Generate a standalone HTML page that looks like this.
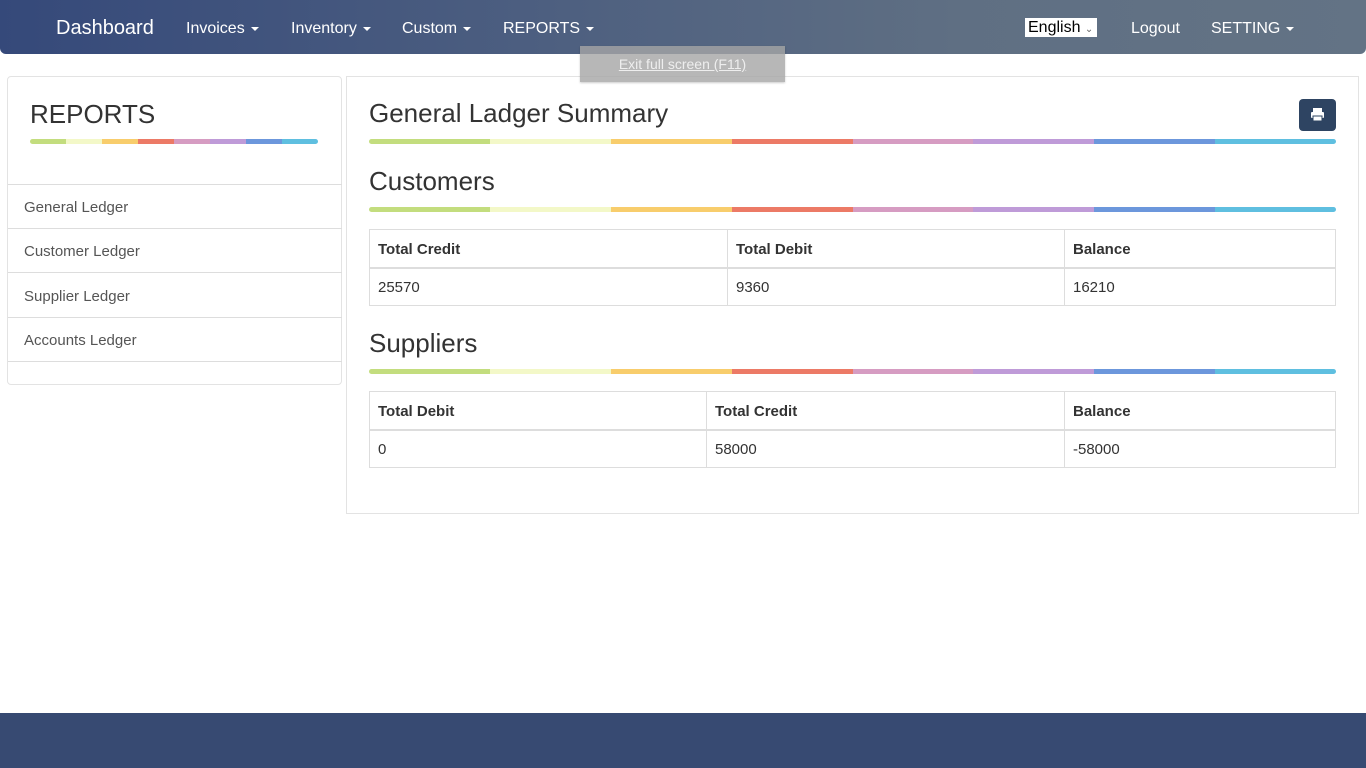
<!DOCTYPE html>
<html><head><style>
*{box-sizing:border-box}
body{margin:0;width:1366px;height:768px;position:relative;font-family:"Liberation Sans",sans-serif;color:#333;background:#fff;overflow:hidden}
.nav{position:absolute;left:0;top:0;width:1366px;height:54px;background:linear-gradient(90deg,#35497a 0%,#4d5f80 40%,#5f6f83 70%,#637385 100%);border-radius:0 0 6px 6px;color:#fff}
.nav span{position:absolute;top:20px;font-size:16px}
.car{display:inline-block;border-left:4px solid transparent;border-right:4px solid transparent;border-top:4px solid #fff;vertical-align:middle;margin-left:6px}
.fs{position:absolute;left:580px;top:46px;width:205px;height:36px;background:rgba(165,165,165,.8);color:#eee;font-size:14px;text-align:center;line-height:37px;text-decoration:underline;z-index:5;box-shadow:0 1px 2px rgba(0,0,0,.2)}
.panel{position:absolute;border:1px solid #e3e3e3;background:#fff}
.bar{position:absolute;height:5px;border-radius:3px;display:flex;overflow:hidden}
.bar i{flex:1}
.c1{background:#c3dd7e}.c2{background:#f3f8c8}.c3{background:#f8cd6c}.c4{background:#ec7a66}.c5{background:#d69cc2}.c6{background:#bf9bd8}.c7{background:#6c97dc}.c8{background:#5fbfe0}
.li{position:absolute;left:0;width:334px;border-top:1px solid #ddd;font-size:15px;color:#555;padding-left:16px}
h2{position:absolute;margin:0;font-weight:normal;font-size:26px;color:#333}
table{position:absolute;border-collapse:collapse;font-size:15px;left:369px;width:967px}
td,th{border:1px solid #ddd;text-align:left;padding:2px 8px 0;height:38px}
th{border-bottom:2px solid #ddd}
</style></head><body>
<div class="nav">
<span style="left:56px;top:17px;font-size:20px">Dashboard</span>
<span style="left:186px">Invoices<i class="car"></i></span>
<span style="left:291px">Inventory<i class="car"></i></span>
<span style="left:402px">Custom<i class="car"></i></span>
<span style="left:503px">REPORTS<i class="car"></i></span>
<span style="left:1025px;top:18px;background:#fff;color:#000;height:19px;width:72px;padding-left:3px;line-height:19px">English <span style="position:static;font-size:10px;color:#666">&#8964;</span></span>
<span style="left:1131px">Logout</span>
<span style="left:1211px">SETTING<i class="car"></i></span>
</div>
<div class="fs">Exit full screen (F11)</div>

<div class="panel" style="left:7px;top:76px;width:335px;height:309px;border-radius:4px">
<div style="position:absolute;left:22px;top:22px;font-size:26px">REPORTS</div>
<div class="bar" style="left:22px;top:62px;width:288px"><i class="c1"></i><i class="c2"></i><i class="c3"></i><i class="c4"></i><i class="c5"></i><i class="c6"></i><i class="c7"></i><i class="c8"></i></div>
<div class="li" style="top:107px;height:45px;line-height:46px">General Ledger</div>
<div class="li" style="top:151px;height:45px;line-height:46px">Customer Ledger</div>
<div class="li" style="top:195px;height:45px;line-height:48px">Supplier Ledger</div>
<div class="li" style="top:240px;height:45px;line-height:46px">Accounts Ledger</div>
<div class="li" style="top:284px;height:1px"></div>
</div>

<div class="panel" style="left:346px;top:76px;width:1013px;height:438px"></div>
<h2 style="left:369px;top:98px">General Ladger Summary</h2>
<div style="position:absolute;left:1299px;top:99px;width:37px;height:32px;background:#2e4462;border-radius:4px">
<svg width="37" height="32" viewBox="0 0 37 32"><rect x="14" y="9" width="9" height="4" fill="#fff"/><rect x="12" y="13" width="13" height="6" rx="1" fill="#fff"/><rect x="14" y="17" width="9" height="5" fill="#fff" stroke="#2e4462" stroke-width="1"/></svg></div>
<div class="bar" style="left:369px;top:139px;width:967px"><i class="c1"></i><i class="c2"></i><i class="c3"></i><i class="c4"></i><i class="c5"></i><i class="c6"></i><i class="c7"></i><i class="c8"></i></div>
<h2 style="left:369px;top:166px">Customers</h2>
<div class="bar" style="left:369px;top:207px;width:967px"><i class="c1"></i><i class="c2"></i><i class="c3"></i><i class="c4"></i><i class="c5"></i><i class="c6"></i><i class="c7"></i><i class="c8"></i></div>
<table style="top:229px"><tr><th style="width:358px">Total Credit</th><th style="width:337px">Total Debit</th><th>Balance</th></tr><tr><td>25570</td><td>9360</td><td>16210</td></tr></table>
<h2 style="left:369px;top:328px">Suppliers</h2>
<div class="bar" style="left:369px;top:369px;width:967px"><i class="c1"></i><i class="c2"></i><i class="c3"></i><i class="c4"></i><i class="c5"></i><i class="c6"></i><i class="c7"></i><i class="c8"></i></div>
<table style="top:391px"><tr><th style="width:337px">Total Debit</th><th style="width:358px">Total Credit</th><th>Balance</th></tr><tr><td>0</td><td>58000</td><td>-58000</td></tr></table>

<div style="position:absolute;left:0;top:713px;width:1366px;height:55px;background:#374a72"></div>
</body></html>
